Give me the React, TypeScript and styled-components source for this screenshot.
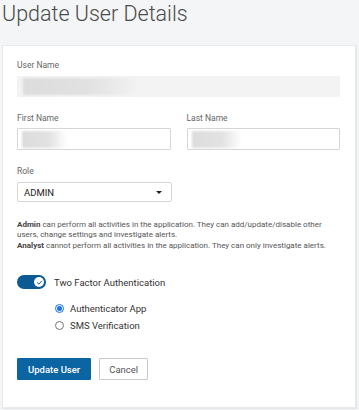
import React, { useState } from 'react';
import styled, { createGlobalStyle } from 'styled-components';

const GlobalStyle = createGlobalStyle`
    html, body {
        margin: 0;
        padding: 0;
        background: #f4f5f7;
        font-family: Roboto, 'Liberation Sans', Arial, sans-serif;
    }
`;

const Page = styled.div`
    width: 359px;
    height: 410px;
    padding: 0 3px 0 2px;
    box-sizing: border-box;
    background: #f4f5f7;
`;

const Title = styled.h1`
    margin: 0 0 17px 0;
    font-size: 21.5px;
    line-height: 28px;
    font-weight: 300;
    color: #4a4a4a;
`;

const Card = styled.div`
    background: #fff;
    border: 1px solid #e9eaec;
    box-shadow: 1px 1px 1px rgba(0, 0, 0, 0.06);
    padding: 13px 15px 0 14px;
    height: 363px;
    box-sizing: border-box;
`;

const Row = styled.div`
    display: flex;
    gap: 16px;
`;

const Field = styled.div<{ $top?: number }>`
    display: flex;
    flex-direction: column;
    flex: 1;
    margin-top: ${(p) => p.$top ?? 0}px;
`;

const Label = styled.label<{ $gap?: number }>`
    font-size: 8.5px;
    line-height: 12px;
    color: #666;
    margin-bottom: ${(p) => p.$gap ?? 4}px;
`;

const Blur = styled.div<{ $w: number }>`
    width: ${(p) => p.$w}px;
    height: 17px;
    background: linear-gradient(90deg, #dcdcdc 0%, #e2e2e2 60%, rgba(230, 230, 230, 0) 100%);
    filter: blur(1px);
`;

const ReadOnlyBox = styled.div`
    height: 21px;
    background: #f3f3f3;
    display: flex;
    align-items: center;
    padding-left: 6px;
`;

const InputBox = styled.div`
    height: 22px;
    box-sizing: border-box;
    border: 1px solid #d6d6d6;
    border-radius: 1px;
    display: flex;
    align-items: center;
    padding-left: 4px;
`;

const Select = styled.div`
    width: 155px;
    height: 20px;
    box-sizing: border-box;
    border: 1px solid #d6d6d6;
    border-radius: 2px;
    display: flex;
    align-items: center;
    justify-content: space-between;
    padding: 0 9px 0 6px;
    font-size: 9.5px;
    color: #222;
`;

const Caret = styled.span`
    width: 0;
    height: 0;
    border-left: 3px solid transparent;
    border-right: 3px solid transparent;
    border-top: 3px solid #222;
`;

const Help = styled.div<{ $top: number }>`
    margin: ${(p) => p.$top}px 0 0 0;
    font-size: 8px;
    line-height: 10px;
    color: #555;
    b {
        font-weight: 700;
        color: #444;
    }
`;

const HelpLine = styled.span`
    display: block;
    white-space: nowrap;
`;

const ToggleRow = styled.div`
    display: flex;
    align-items: center;
    gap: 8px;
    margin-top: 24px;
    font-size: 9.5px;
    color: #333;
`;

const Track = styled.div<{ $on: boolean }>`
    width: 29px;
    height: 14px;
    border-radius: 7px;
    background: ${(p) => (p.$on ? '#0b5a92' : '#bbb')};
    display: flex;
    align-items: center;
    justify-content: ${(p) => (p.$on ? 'flex-end' : 'flex-start')};
    padding: 0 2px;
    box-sizing: border-box;
    cursor: pointer;
`;

const Knob = styled.div`
    width: 10px;
    height: 10px;
    border-radius: 50%;
    background: #fff;
    display: flex;
    align-items: center;
    justify-content: center;
`;

const Options = styled.div`
    display: flex;
    flex-direction: column;
    margin: 11px 0 0 38px;
`;

const Option = styled.label`
    display: flex;
    align-items: center;
    gap: 6px;
    height: 17px;
    font-size: 9.5px;
    color: #333;
    cursor: pointer;
`;

const Radio = styled.span<{ $checked: boolean }>`
    width: 9px;
    height: 9px;
    box-sizing: border-box;
    border-radius: 50%;
    border: 1px solid ${(p) => (p.$checked ? '#1a73e8' : '#777')};
    display: flex;
    align-items: center;
    justify-content: center;
    &::after {
        content: '';
        width: 5px;
        height: 5px;
        border-radius: 50%;
        background: ${(p) => (p.$checked ? '#1a73e8' : 'transparent')};
    }
`;

const Actions = styled.div`
    display: flex;
    gap: 8px;
    margin-top: 24px;
`;

const Button = styled.button<{ $primary?: boolean }>`
    height: 22px;
    box-sizing: border-box;
    padding: 0 ${(p) => (p.$primary ? 10 : 9)}px;
    font-family: inherit;
    font-size: 9.5px;
    font-weight: ${(p) => (p.$primary ? 500 : 400)};
    border-radius: 1px;
    border: 1px solid ${(p) => (p.$primary ? '#0b65a3' : '#c9c9c9')};
    background: ${(p) => (p.$primary ? '#0b65a3' : '#fff')};
    color: ${(p) => (p.$primary ? '#fff' : '#555')};
    cursor: pointer;
`;

const App = () => {
    const [twoFactor, setTwoFactor] = useState(true);
    const [method, setMethod] = useState('app');

    return (
        <Page>
            <GlobalStyle />
            <Title>Update User Details</Title>
            <Card>
                <Field>
                    <Label $gap={5}>User Name</Label>
                    <ReadOnlyBox>
                        <Blur $w={115} />
                    </ReadOnlyBox>
                </Field>
                <Row>
                    <Field $top={15}>
                        <Label>First Name</Label>
                        <InputBox>
                            <Blur $w={45} />
                        </InputBox>
                    </Field>
                    <Field $top={15}>
                        <Label>Last Name</Label>
                        <InputBox>
                            <Blur $w={50} />
                        </InputBox>
                    </Field>
                </Row>
                <Field $top={15}>
                    <Label $gap={5}>Role</Label>
                    <Select>
                        ADMIN
                        <Caret />
                    </Select>
                </Field>
                <Help $top={18}>
                    <HelpLine>
                        <b>Admin</b> can perform all activities in the application. They can add/update/disable other
                    </HelpLine>
                    <HelpLine>users, change settings and investigate alerts.</HelpLine>
                </Help>
                <Help $top={1}>
                    <HelpLine>
                        <b>Analyst</b> cannot perform all activities in the application. They can only investigate alerts.
                    </HelpLine>
                </Help>
                <ToggleRow>
                    <Track $on={twoFactor} onClick={() => setTwoFactor(!twoFactor)}>
                        <Knob>
                            {twoFactor && (
                                <svg width="7" height="7" viewBox="0 0 10 10">
                                    <path d="M2 5.3 L4.2 7.4 L8 3" stroke="#0b5a92" strokeWidth="1.4" fill="none" strokeLinecap="round" strokeLinejoin="round" />
                                </svg>
                            )}
                        </Knob>
                    </Track>
                    Two Factor Authentication
                </ToggleRow>
                <Options>
                    <Option onClick={() => setMethod('app')}>
                        <Radio $checked={method === 'app'} />
                        Authenticator App
                    </Option>
                    <Option onClick={() => setMethod('sms')}>
                        <Radio $checked={method === 'sms'} />
                        SMS Verification
                    </Option>
                </Options>
                <Actions>
                    <Button $primary>Update User</Button>
                    <Button>Cancel</Button>
                </Actions>
            </Card>
        </Page>
    );
};

export default App;
